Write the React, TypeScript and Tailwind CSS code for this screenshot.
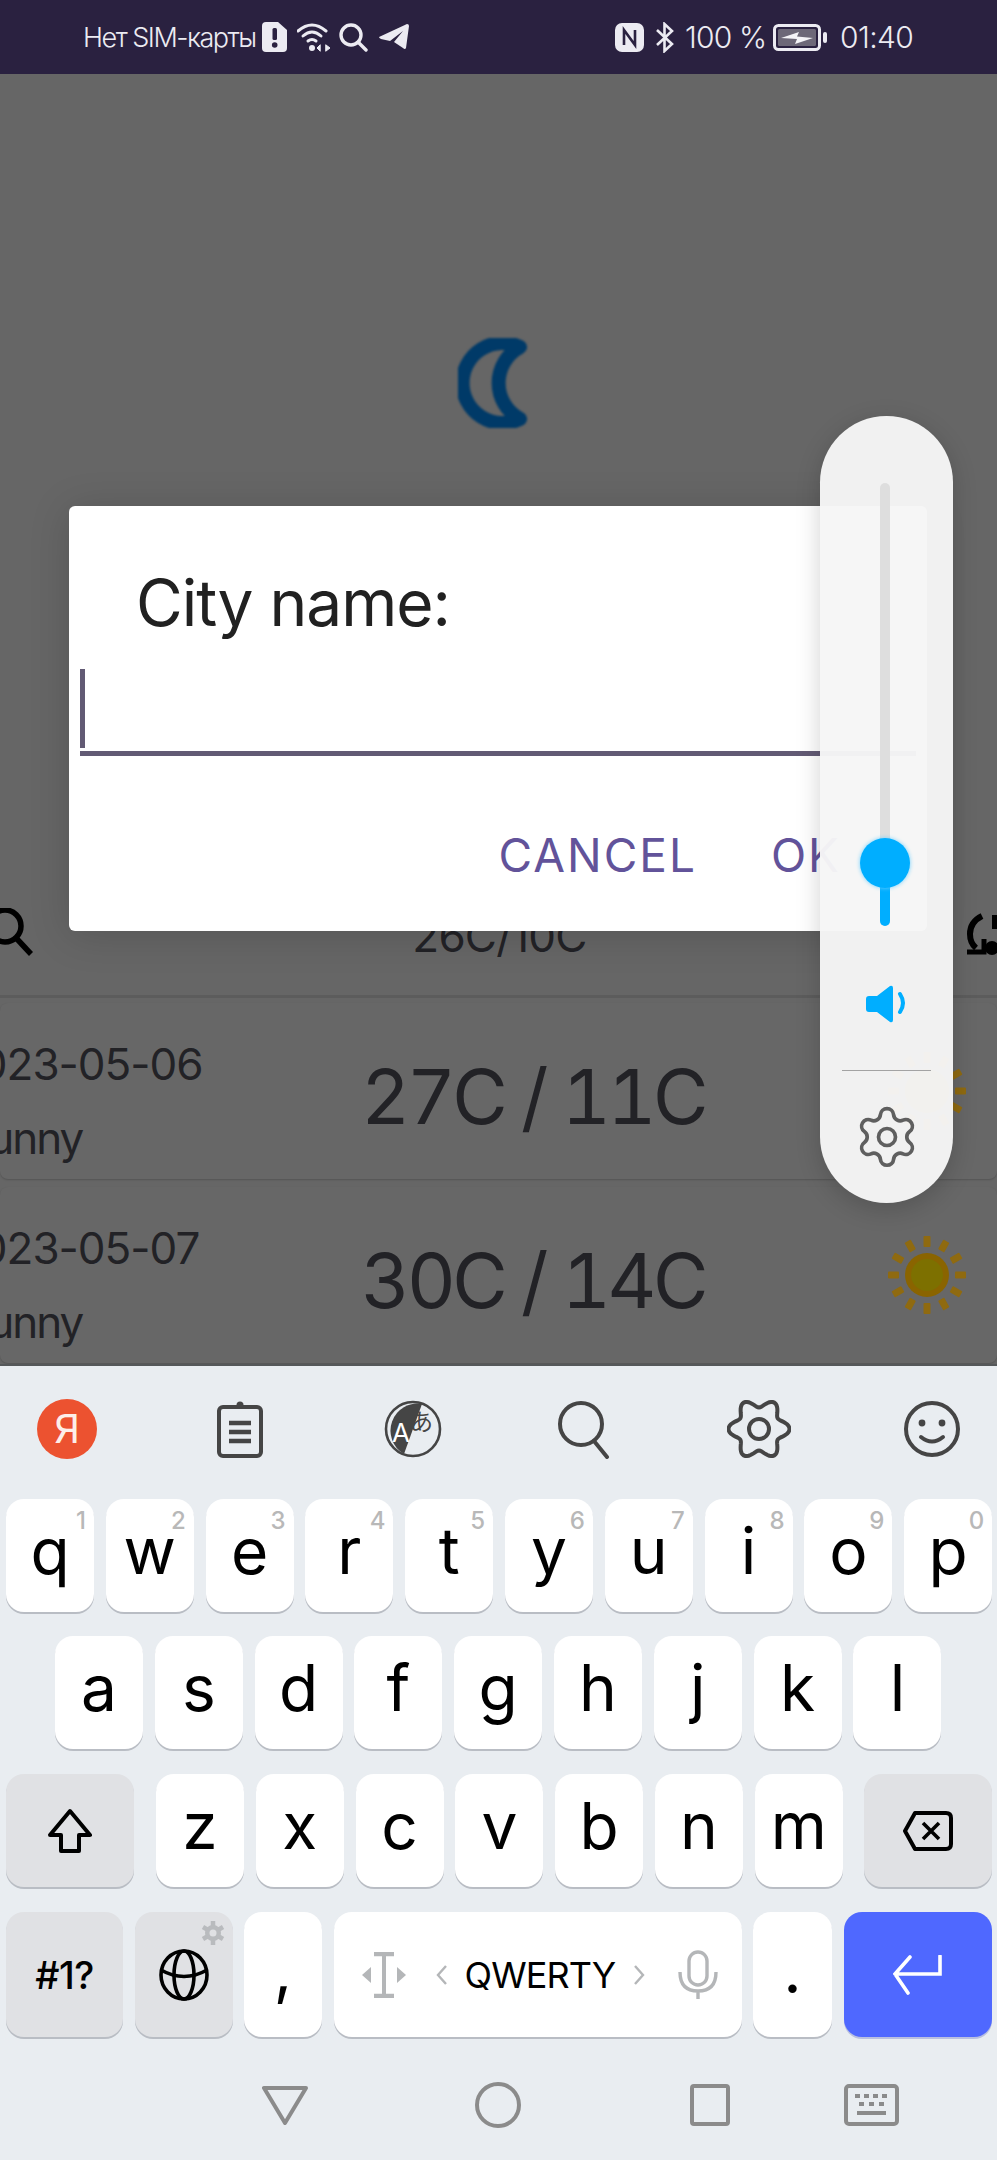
import { Settings } from "lucide-react";

const row1 = [
  ["q", "1"],
  ["w", "2"],
  ["e", "3"],
  ["r", "4"],
  ["t", "5"],
  ["y", "6"],
  ["u", "7"],
  ["i", "8"],
  ["o", "9"],
  ["p", "0"],
];
const row2 = ["a", "s", "d", "f", "g", "h", "j", "k", "l"];
const row3 = ["z", "x", "c", "v", "b", "n", "m"];

const forecast = [
  { date: "2023-05-06", temp: "27C / 11C" },
  { date: "2023-05-07", temp: "30C / 14C" },
];

function wavyGear() {
  const pts: string[] = [];
  for (let i = 0; i < 120; i++) {
    const a = (i / 120) * Math.PI * 2;
    const r = 26 + 4.5 * Math.cos(6 * a);
    pts.push(`${(32 + r * Math.cos(a)).toFixed(2)},${(32 + r * Math.sin(a)).toFixed(2)}`);
  }
  return `M${pts.join("L")}Z`;
}

function Sun() {
  const rays = Array.from({ length: 12 }, (_, i) => i * 30);
  return (
    <svg width="84" height="84" viewBox="0 0 84 84" className="blur-[0.4px]">
      {rays.map((deg) => (
        <rect key={deg} x="38.5" y="3" width="7" height="11" rx="1" fill="#8f6a10" transform={`rotate(${deg} 42 42)`} />
      ))}
      <circle cx="42" cy="42" r="22" fill="#8a6400" />
      <circle cx="42" cy="42" r="16" fill="#7d7000" />
    </svg>
  );
}

function StatusBar() {
  return (
    <div className="h-[74px] shrink-0 bg-[#2a2140] flex items-center pl-[83px] text-[#ecebf2] text-[27px] leading-none font-light tracking-[-1.5px]">
      <span className="w-[179px] whitespace-nowrap">Нет SIM-карты</span>
      <svg width="25" height="30" viewBox="0 0 25 30">
        <path d="M4 0H16L25 8V26Q25 30 21 30H4Q0 30 0 26V4Q0 0 4 0Z" fill="#ecebf2" />
        <rect x="10.5" y="6" width="4.5" height="12" rx="1.5" fill="#2a2140" />
        <circle cx="12.7" cy="23" r="2.8" fill="#2a2140" />
      </svg>
      <svg width="34" height="30" viewBox="0 0 34 30" className="ml-[10px]" fill="none" stroke="#ecebf2" strokeWidth="3" strokeLinecap="round">
        <path d="M1 9Q15 -3 29 9" />
        <path d="M6 14Q15 6 24 14" />
        <path d="M11 19Q15 16 19 19" />
        <circle cx="15" cy="26" r="3" fill="#ecebf2" stroke="none" />
        <path d="M23 23L20 26L23 29Z" fill="#ecebf2" strokeWidth="1" />
        <path d="M29 23L33 26L29 29Z" fill="#ecebf2" strokeWidth="1" />
      </svg>
      <svg width="29" height="29" viewBox="0 0 29 29" className="ml-[8px]" fill="none" stroke="#ecebf2" strokeWidth="3.4" strokeLinecap="round">
        <circle cx="12" cy="12" r="10" />
        <path d="M19 19L27 27" />
      </svg>
      <svg width="30" height="26" viewBox="0 0 30 26" className="ml-[11px]" fill="#ecebf2">
        <path d="M0 13L28 0Q30 0 30 2L27 24Q26 26 24 24L15 18L24 7L11 17L2 15Q0 14 0 13Z" />
      </svg>

      <svg width="29" height="29" viewBox="0 0 29 29" className="ml-[206px]">
        <rect width="29" height="29" rx="7" fill="#ecebf2" />
        <path d="M9 22V7L20 22V7" fill="none" stroke="#2a2140" strokeWidth="2.6" />
      </svg>
      <svg width="19" height="31" viewBox="0 0 19 31" className="ml-[11px]" fill="none" stroke="#ecebf2" strokeWidth="2.6">
        <path d="M2 8L17 22L9.5 29V2L17 9L2 23" />
      </svg>
      <span className="ml-[11px] w-[88px] whitespace-nowrap text-[30px] tracking-[-0.8px]">100 %</span>
      <svg width="55" height="27" viewBox="0 0 55 27">
        <rect x="1.5" y="1.5" width="45" height="24" rx="4" fill="none" stroke="#ecebf2" strokeWidth="3" />
        <rect x="5" y="5" width="38" height="17" rx="1.5" fill="#6d6878" />
        <path d="M8 14L26 8L24 12.5L40 14L22 20L24 15Z" fill="#f4f3f7" />
        <rect x="50" y="8" width="4" height="11" rx="2" fill="#ecebf2" />
      </svg>
      <span className="ml-[12px] whitespace-nowrap text-[30px] tracking-[-0.6px]">01:40</span>
    </div>
  );
}

function Backdrop() {
  return (
    <div className="flex-1 bg-[#666666] flex flex-col text-[#222226] overflow-hidden">
      <div className="pt-[264px] pl-[458px] h-[352px]">
        <svg width="72" height="90" viewBox="0 0 72 90" fill="none" className="blur-[1px]">
          <path d="M62 9A40 40 0 1 0 62 81A41 41 0 0 1 62 9Z" stroke="#003a68" strokeWidth="14" strokeLinejoin="round" />
        </svg>
      </div>

      <div className="mt-[482px] h-[90px] flex justify-between items-start border-b-[3px] border-[#5c5c5c]">
        <svg width="34" height="50" viewBox="0 0 34 50" fill="none" stroke="#000" strokeWidth="5.5">
          <circle cx="5" cy="18" r="16" />
          <path d="M17 31L31 46" />
        </svg>
        <span className="mt-[6px] text-[44px] leading-none tracking-[-0.8px]">26C/10C</span>
        <svg width="32" height="50" viewBox="0 0 32 50" className="mt-[4px]">
          <path d="M17 4Q5 10 5 22Q5 31 11 36" fill="none" stroke="#000" strokeWidth="6" />
          <path d="M2 40H19V27" fill="none" stroke="#000" strokeWidth="5" />
          <rect x="27" y="3" width="6" height="14" fill="#000" />
          <circle cx="27" cy="36" r="7" fill="#000" />
        </svg>
      </div>

      <div className="mt-[5px] flex flex-col gap-[8px]">
        {forecast.map((f) => (
          <div key={f.date} className="h-[176px] flex items-center rounded-lg bg-[#676767] shadow-[0_1px_2px_rgba(0,0,0,0.18)]">
            <div className="ml-[-46px] w-[407px] pt-[22px] flex flex-col text-[44px] leading-none tracking-[-1px]">
              <span className="mt-[-2px]">{f.date}</span>
              <span className="mt-[30px] ml-[8px] tracking-[-2px]">Sunny</span>
            </div>
            <span className="pt-[10px] text-[76px] leading-none tracking-[-3.6px] tabular-nums whitespace-nowrap">{f.temp}</span>
            <div className="ml-auto mr-[28px]">
              <Sun />
            </div>
          </div>
        ))}
      </div>
    </div>
  );
}

function CityDialog() {
  return (
    <div className="absolute left-[69px] top-[506px] w-[858px] h-[425px] bg-white rounded-[6px] shadow-[0_4px_40px_rgba(0,0,0,0.16)] flex flex-col">
      <div className="pt-[65px] pl-[67px] text-[64px] leading-none text-[#212121] tracking-[-1px]">City name:</div>
      <div className="mt-[34px] mx-[11px] h-[87px] flex flex-col">
        <div className="w-[5px] h-[79px] bg-[#625a74]" />
        <div className="mt-[3px] h-[5px] bg-[#625a74]" />
      </div>
      <div className="mt-[76px] pr-[86px] flex justify-end gap-[74px] text-[46px] leading-none text-[#62539a] tracking-[2px]">
        <span>CANCEL</span>
        <span>OK</span>
      </div>
    </div>
  );
}

function VolumePanel() {
  return (
    <div className="absolute left-[820px] top-[416px] w-[133px] h-[787px] rounded-full bg-[#f6f6f6]/[0.967] shadow-[0_6px_24px_rgba(0,0,0,0.18)] flex flex-col items-center pt-[67px]">
      <div className="relative mr-[3px] w-[10px] h-[443px] rounded-full bg-[#dedede]">
        <div className="absolute left-0 bottom-0 w-[10px] h-[63px] rounded-full bg-[#00aeff]" />
        <div className="absolute left-[-20px] top-[355px] w-[50px] h-[50px] rounded-full bg-[#00aeff] shadow-[0_0_4px_#6fd0ff]" />
      </div>
      <svg width="42" height="38" viewBox="0 0 42 38" className="mt-[59px]">
        <path d="M3 11H11L24 1Q27 0 27 3V35Q27 38 24 37L11 27H3Q0 27 0 24V14Q0 11 3 11Z" fill="#00aeff" />
        <path d="M34 9Q40 18 34 27" fill="none" stroke="#00aeff" strokeWidth="4" strokeLinecap="round" />
      </svg>
      <div className="mt-[47px] w-[89px] h-px bg-[#a3a3a3]" />
      <Settings size={68} strokeWidth={1.3} className="mt-[32px] text-[#5f5f5f]" />
    </div>
  );
}

function LetterKey({ label, hint }: { label: string; hint?: string }) {
  return (
    <div className="relative w-[88px] h-[113px] rounded-[18px] bg-white shadow-[0_2px_0_#b9bdc4] flex justify-center pt-[20px] text-[64px] leading-none font-normal text-black">
      {label}
      {hint && <span className="absolute right-[8px] top-[10px] text-[24px] leading-none font-medium text-[#b8b8b8]">{hint}</span>}
    </div>
  );
}

function GrayKey({ className, children }: { className: string; children: React.ReactNode }) {
  return (
    <div className={`relative rounded-[18px] bg-[#e0e1e4] shadow-[0_2px_0_#b9bdc4] flex items-center justify-center ${className}`}>
      {children}
    </div>
  );
}

function Toolbar() {
  return (
    <div className="h-[133px] pl-[35px] flex items-center gap-[109px] pb-[8px]">
      <div className="w-[64px] flex justify-center">
        <div className="w-[60px] h-[60px] rounded-full bg-[#ec5230] text-[#fdeee9] text-[40px] leading-none font-normal flex items-center justify-center">
          Я
        </div>
      </div>
      <svg width="64" height="60" viewBox="0 0 64 60" fill="none" stroke="#454545" strokeWidth="4">
        <rect x="11" y="8" width="42" height="49" rx="4" />
        <circle cx="32" cy="6" r="3.5" fill="#454545" stroke="none" />
        <path d="M21 24H43M21 33H43M21 42H43" strokeWidth="4.4" />
      </svg>
      <svg width="64" height="60" viewBox="0 0 64 60">
        <circle cx="32" cy="30" r="27" fill="none" stroke="#454545" strokeWidth="2.6" />
        <path d="M41 5A27 27 0 0 0 23 55Z" fill="#454545" />
        <text x="11" y="43" fontSize="26" fill="#fff" fontFamily="Inter, sans-serif">A</text>
        <text x="29" y="31" fontSize="23" fill="#454545" fontFamily="'Noto Sans CJK JP', sans-serif">あ</text>
      </svg>
      <svg width="64" height="60" viewBox="0 0 64 60" fill="none" stroke="#454545" strokeWidth="4" strokeLinecap="round">
        <circle cx="27" cy="25" r="21" />
        <path d="M40 42L53 58" />
      </svg>
      <svg width="64" height="64" viewBox="0 0 64 64" fill="none" stroke="#454545" strokeWidth="4">
        <path d={wavyGear()} />
        <circle cx="32" cy="32" r="10" />
      </svg>
      <svg width="64" height="60" viewBox="0 0 64 60" fill="none" stroke="#454545" strokeWidth="4" strokeLinecap="round">
        <circle cx="32" cy="30" r="26" />
        <circle cx="22" cy="24" r="3.4" fill="#454545" stroke="none" />
        <circle cx="42" cy="24" r="3.4" fill="#454545" stroke="none" />
        <path d="M21 38Q32 47 43 38" />
      </svg>
    </div>
  );
}

function Keyboard() {
  return (
    <div className="h-[796px] shrink-0 bg-[#e9edf1] flex flex-col border-t-2 border-[#55585a]">
      <Toolbar />
      <div className="flex gap-[11.8px] pl-[6px]">
        {row1.map(([k, n]) => (
          <LetterKey key={k} label={k} hint={n} />
        ))}
      </div>
      <div className="mt-[24px] flex gap-[11.8px] pl-[55px]">
        {row2.map((k) => (
          <LetterKey key={k} label={k} />
        ))}
      </div>
      <div className="mt-[25px] flex pl-[6px]">
        <GrayKey className="w-[128px] h-[113px]">
          <svg width="44" height="46" viewBox="0 0 44 46" fill="none" stroke="#000" strokeWidth="4" strokeLinejoin="round">
            <path d="M22 3L42 27H31V43H13V27H2Z" />
          </svg>
        </GrayKey>
        <div className="ml-[22px] flex gap-[11.8px]">
          {row3.map((k) => (
            <LetterKey key={k} label={k} />
          ))}
        </div>
        <GrayKey className="ml-[21px] w-[128px] h-[113px]">
          <svg width="50" height="40" viewBox="0 0 50 40" fill="none" stroke="#000" strokeWidth="4" strokeLinejoin="round">
            <path d="M12 2H43Q48 2 48 7V33Q48 38 43 38H12L2 20Z" />
            <path d="M20 12L36 28M36 12L20 28" strokeWidth="3.6" />
          </svg>
        </GrayKey>
      </div>
      <div className="mt-[25px] flex gap-[11.5px] pl-[6px] h-[125px]">
        <GrayKey className="w-[117px] h-[125px] text-[38px] leading-none font-medium tracking-[-0.5px] text-black">#1?</GrayKey>
        <GrayKey className="w-[98px] h-[125px]">
          <svg width="52" height="52" viewBox="0 0 52 52" fill="none" stroke="#000" strokeWidth="3.6">
            <ellipse cx="26" cy="26" rx="23" ry="24" />
            <ellipse cx="26" cy="26" rx="10" ry="24" />
            <path d="M3 21Q26 34 49 21" />
          </svg>
          <svg width="24" height="24" viewBox="0 0 24 24" className="absolute right-[8px] top-[9px]">
            <path d="M12 0V24M2 6L22 18M22 6L2 18" stroke="#b9bbbe" strokeWidth="4.5" />
            <circle cx="12" cy="12" r="8" fill="#b9bbbe" />
            <circle cx="12" cy="12" r="3.5" fill="#e0e1e4" />
          </svg>
        </GrayKey>
        <div className="w-[78px] h-[125px] rounded-[18px] bg-white shadow-[0_2px_0_#b9bdc4] flex justify-center pt-[26px] text-[64px] leading-none text-black">,</div>
        <div className="w-[408px] h-[125px] rounded-[18px] bg-white shadow-[0_2px_0_#b9bdc4] flex items-center pl-[27px]">
          <svg width="46" height="46" viewBox="0 0 46 46" fill="#b4b6b8">
            <path d="M13 2H33M13 44H33" stroke="#b4b6b8" strokeWidth="4.5" />
            <rect x="21" y="2" width="4" height="42" />
            <path d="M10 15V31L1 23Z" />
            <path d="M36 15V31L45 23Z" />
          </svg>
          <svg width="12" height="20" viewBox="0 0 12 20" fill="none" stroke="#b4b6b8" strokeWidth="2.4" className="ml-[29px]">
            <path d="M10 1L2 10L10 19" />
          </svg>
          <span className="ml-[17px] text-[36px] leading-none text-black tracking-[-0.9px]">QWERTY</span>
          <svg width="12" height="20" viewBox="0 0 12 20" fill="none" stroke="#b4b6b8" strokeWidth="2.4" className="ml-[18px]">
            <path d="M2 1L10 10L2 19" />
          </svg>
          <svg width="40" height="50" viewBox="0 0 40 50" fill="none" stroke="#b4b6b8" strokeWidth="3.4" className="ml-[33px]">
            <rect x="11" y="2" width="18" height="33" rx="9" />
            <path d="M2 22Q2 41 20 41Q38 41 38 22M20 41V49" />
          </svg>
        </div>
        <div className="w-[79px] h-[125px] rounded-[18px] bg-white shadow-[0_2px_0_#b9bdc4] flex justify-center pt-[26px] text-[64px] leading-none text-black">.</div>
        <div className="w-[148px] h-[125px] rounded-[18px] bg-[#4f68ff] shadow-[0_2px_0_#b9c0e0] flex items-center justify-center">
          <svg width="50" height="40" viewBox="0 0 50 40" fill="none" stroke="#fff" strokeWidth="3.6" strokeLinecap="round">
            <path d="M47 1V19H2M17 2L2 19L15 38" />
          </svg>
        </div>
      </div>
      <div className="mt-[45px] pl-[262px] flex items-center text-[#8b8b8b]">
        <svg width="46" height="40" viewBox="0 0 46 40" fill="none" stroke="#8b8b8b" strokeWidth="4" strokeLinejoin="round">
          <path d="M2 3H44L23 38Z" />
        </svg>
        <svg width="46" height="46" viewBox="0 0 46 46" fill="none" stroke="#8b8b8b" strokeWidth="4" className="ml-[167px]">
          <circle cx="23" cy="23" r="21" />
        </svg>
        <svg width="40" height="42" viewBox="0 0 40 42" fill="none" stroke="#8b8b8b" strokeWidth="4" strokeLinejoin="round" className="ml-[169px]">
          <rect x="2" y="2" width="36" height="38" rx="2" />
        </svg>
        <svg width="55" height="42" viewBox="0 0 55 42" fill="none" stroke="#8b8b8b" strokeWidth="4" className="ml-[114px]">
          <rect x="2" y="2" width="51" height="38" rx="3" />
          <path d="M11 12H16M20 12H25M29 12H34M38 12H43M15 20H20M25 20H30M35 20H40M13 29H42" strokeWidth="4" />
        </svg>
      </div>
    </div>
  );
}

export default function App() {
  return (
    <div className="relative w-[997px] h-[2160px] overflow-hidden flex flex-col [font-family:Inter,sans-serif]">
      <StatusBar />
      <Backdrop />
      <Keyboard />
      <CityDialog />
      <VolumePanel />
    </div>
  );
}
